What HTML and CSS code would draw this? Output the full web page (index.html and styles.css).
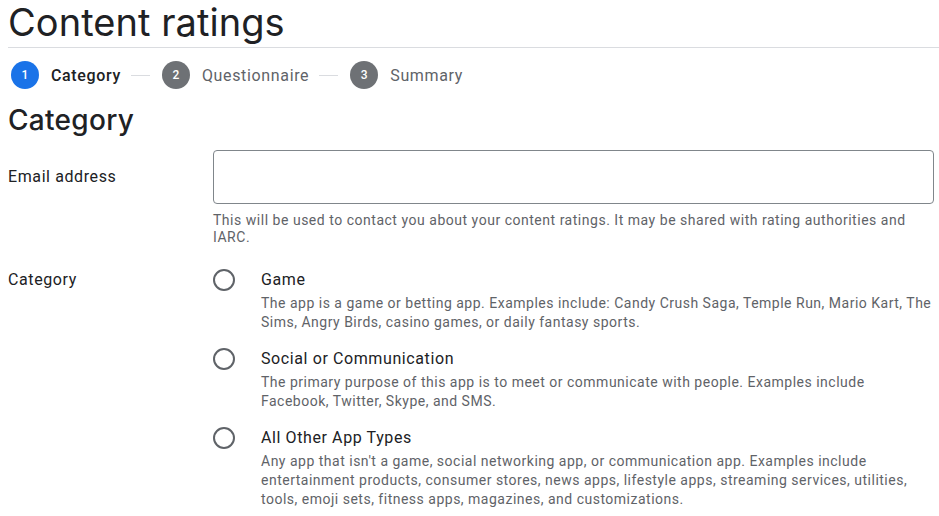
FILE: index.html
```html
<!DOCTYPE html>
<html>
<head>
<meta charset="utf-8">
<link rel="stylesheet" href="styles.css">
</head>
<body>
<div class="page">
  <h1 class="title">Content ratings</h1>
  <div class="divider"></div>
  <div class="stepper">
    <div class="step active"><span class="num">1</span><span class="step-label">Category</span></div>
    <span class="step-line"></span>
    <div class="step"><span class="num">2</span><span class="step-label">Questionnaire</span></div>
    <span class="step-line"></span>
    <div class="step"><span class="num">3</span><span class="step-label">Summary</span></div>
  </div>
  <h2 class="section">Category</h2>
  <div class="row email-row">
    <div class="label">Email address</div>
    <div class="field">
      <div class="input"></div>
      <div class="helper">This will be used to contact you about your content ratings. It may be shared with rating authorities and IARC.</div>
    </div>
  </div>
  <div class="row cat-row">
    <div class="label">Category</div>
    <div class="options">
      <div class="option">
        <span class="radio"></span>
        <div class="opt-text">
          <div class="opt-title">Game</div>
          <div class="opt-desc">The app is a game or betting app. Examples include: Candy Crush Saga, Temple Run, Mario Kart, The Sims, Angry Birds, casino games, or daily fantasy sports.</div>
        </div>
      </div>
      <div class="option">
        <span class="radio"></span>
        <div class="opt-text">
          <div class="opt-title">Social or Communication</div>
          <div class="opt-desc">The primary purpose of this app is to meet or communicate with people. Examples include Facebook, Twitter, Skype, and SMS.</div>
        </div>
      </div>
      <div class="option">
        <span class="radio"></span>
        <div class="opt-text">
          <div class="opt-title">All Other App Types</div>
          <div class="opt-desc">Any app that isn't a game, social networking app, or communication app. Examples include entertainment products, consumer stores, news apps, lifestyle apps, streaming services, utilities, tools, emoji sets, fitness apps, magazines, and customizations.</div>
        </div>
      </div>
    </div>
  </div>
</div>
</body>
</html>
```
FILE: styles.css
```css
html, body {
  margin: 0;
  padding: 0;
  background: #ffffff;
}
body {
  font-family: Roboto, "Liberation Sans", sans-serif;
  color: #202124;
  overflow: hidden;
}
.page {
  padding: 0 0 0 8px;
}
.title {
  font-family: Inter, Roboto, sans-serif;
  font-weight: 400;
  font-size: 38px;
  line-height: 44px;
  letter-spacing: 0.05px;
  margin: 0;
  color: #202124;
}
.divider {
  height: 1px;
  background: #dadce0;
  margin-top: 3px;
}
.stepper {
  display: flex;
  align-items: center;
  margin-top: 13px;
  padding-left: 3px;
  height: 28px;
}
.step {
  display: flex;
  align-items: center;
  gap: 12px;
  color: #5f6368;
  font-size: 16px;
  letter-spacing: 0.65px;
}
.num {
  width: 28px;
  height: 28px;
  border-radius: 50%;
  background: #6e7175;
  color: #fff;
  font-size: 12px;
  font-weight: 500;
  letter-spacing: 0;
  display: flex;
  align-items: center;
  justify-content: center;
}
.step.active .num {
  background: #1a73e8;
}
.step.active .step-label {
  color: #202124;
  font-weight: 500;
}
.step-line {
  width: 19px;
  height: 1px;
  background: #dadce0;
  margin: 0 12px 0 10px;
}
.section {
  font-family: Inter, Roboto, sans-serif;
  font-weight: 500;
  font-size: 28px;
  line-height: 36px;
  letter-spacing: 0.3px;
  margin: 13px 0 0 0;
  color: #202124;
}
.row {
  display: grid;
  grid-template-columns: 205px 721px;
}
.email-row {
  margin-top: 12px;
}
.label {
  font-size: 16px;
  line-height: 20px;
  letter-spacing: 0.6px;
  color: #202124;
}
.email-row .label {
  padding-top: 17px;
}
.input {
  height: 52px;
  border: 1px solid #80868b;
  border-radius: 4px;
}
.helper {
  font-size: 14px;
  line-height: 17px;
  color: #5f6368;
  letter-spacing: 0.52px;
  margin-top: 8px;
}
.cat-row {
  margin-top: 24px;
}
.options {
  display: flex;
  flex-direction: column;
  gap: 17px;
}
.option {
  display: flex;
  align-items: flex-start;
}
.radio {
  flex: none;
  width: 18px;
  height: 18px;
  border: 2px solid #5f6368;
  border-radius: 50%;
  margin: -1px 26px 0 0;
}
.opt-text {
  width: 673px;
}
.opt-title {
  font-size: 16px;
  line-height: 20px;
  letter-spacing: 0.6px;
  color: #202124;
}
.opt-desc {
  font-size: 14px;
  line-height: 19px;
  color: #5f6368;
  letter-spacing: 0.5px;
  margin-top: 4px;
}
```
